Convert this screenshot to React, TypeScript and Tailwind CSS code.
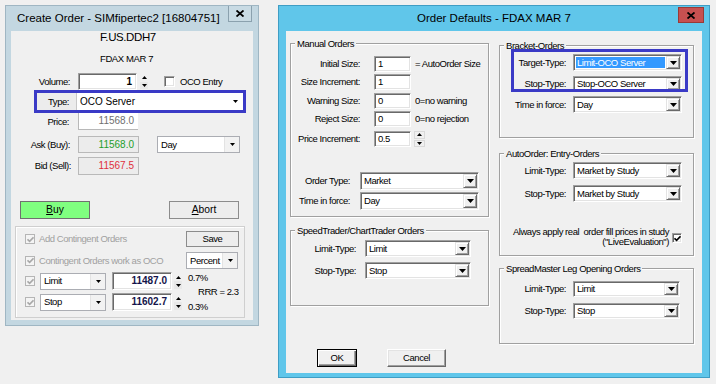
import React from "react";

const regular = "font-['Liberation_Sans',Arial,sans-serif]";

// classic win32 3D borders
const sunken =
  "border border-t-[#a0a0a0] border-l-[#a0a0a0] border-b-white border-r-white shadow-[inset_1px_1px_0_#696969,inset_-1px_-1px_0_#e3e3e3]";
const raised =
  "border border-t-white border-l-white border-b-[#696969] border-r-[#696969] shadow-[inset_-1px_-1px_0_#a0a0a0,inset_1px_1px_0_#e3e3e3]";
const arrowBtn =
  "border border-t-[#e3e3e3] border-l-[#e3e3e3] border-b-[#696969] border-r-[#696969] shadow-[inset_1px_1px_0_#fff,inset_-1px_-1px_0_#a0a0a0] bg-[#f0f0f0]";
const etched = "border border-[#a0a0a0] shadow-[inset_1px_1px_0_#fff,1px_1px_0_#fff]";
const value = `text-[10px] tracking-normal ${regular}`;

function Down({ w = 7, color = "#000" }: { w?: number; color?: string }) {
  const h = Math.ceil(w / 2);
  return (
    <svg width={w} height={h} viewBox={`0 0 ${w} ${h}`}>
      <path d={`M0 0H${w}L${w / 2} ${h}Z`} fill={color} />
    </svg>
  );
}

function Up({ w = 5, color = "#000" }: { w?: number; color?: string }) {
  const h = Math.ceil(w / 2);
  return (
    <svg width={w} height={h} viewBox={`0 0 ${w} ${h}`}>
      <path d={`M0 ${h}H${w}L${w / 2} 0Z`} fill={color} />
    </svg>
  );
}

function Check({ color = "#000" }: { color?: string }) {
  return (
    <svg width="7" height="7" viewBox="0 0 7 7">
      <path d="M0.5 3.3L2.6 5.4L6.5 1.3" fill="none" stroke={color} strokeWidth="1.6" />
    </svg>
  );
}

function CloseX() {
  return (
    <svg width="8" height="7" viewBox="0 0 8 7">
      <path d="M0.5 0.5L7.5 6.5M7.5 0.5L0.5 6.5" stroke="#000" strokeWidth="1.8" />
    </svg>
  );
}

function Combo({ text, className, selected }: { text: string; className: string; selected?: boolean }) {
  return (
    <div className={`flex bg-white ${sunken} ${className}`}>
      {selected ? (
        <div className="my-[2px] ml-[2px] mr-[1px] flex flex-1 items-center bg-[#3399ff] pl-[1px] text-white">{text}</div>
      ) : (
        <div className="flex flex-1 items-center pl-[3px]">{text}</div>
      )}
      <div className={`my-[1px] mr-[1px] flex w-[14px] items-center justify-center ${arrowBtn}`}>
        <Down />
      </div>
    </div>
  );
}

function Field({ text, className }: { text: string; className: string }) {
  return <div className={`flex items-center bg-white pl-[3px] ${sunken} ${className}`}>{text}</div>;
}

function Group({ title, className, children }: { title: string; className: string; children: React.ReactNode }) {
  return (
    <fieldset className={`p-0 ${etched} ${className}`}>
      <legend className="ml-[4px] bg-[#f0f0f0] px-[2px] leading-[13px]">{title}</legend>
      {children}
    </fieldset>
  );
}

function Row({ label, lw, className = "", children }: { label: string; lw: string; className?: string; children: React.ReactNode }) {
  return (
    <div className={`flex items-center ${className}`}>
      <span className={`text-right ${lw}`}>{label}</span>
      {children}
    </div>
  );
}

// themed controls of the Create Order window
function WinCombo({ text, className }: { text: string; className: string }) {
  return (
    <div className={`flex border border-[#abadb3] bg-white ${className}`}>
      <div className="flex flex-1 items-center pl-[3px]">{text}</div>
      <div className="flex w-[15px] items-center justify-center border-l border-[#e3e3e3] bg-[#f2f2f2]">
        <Down w={5} />
      </div>
    </div>
  );
}

function Spin({ className }: { className: string }) {
  return (
    <div className={`flex flex-col ${className}`}>
      <div className="flex flex-1 items-center justify-center">
        <Up w={5} />
      </div>
      <div className="flex flex-1 items-center justify-center bg-[#e8e8e8]">
        <Down w={5} />
      </div>
    </div>
  );
}

function DisabledBox() {
  return (
    <div className="flex h-[10px] w-[10px] items-center justify-center border border-[#b5b5b5] bg-[#f4f4f4]">
      <Check color="#a8a8a8" />
    </div>
  );
}

function CreateOrder() {
  return (
    <div className="absolute left-[5px] top-[5px] flex h-[321px] w-[254px] flex-col border border-[#9fb6c3] bg-[#c3d7e1]">
      <div className={`flex h-[25px] items-center pl-[11px] text-[11.5px] tracking-normal ${regular}`}>
        Create Order - SIMfipertec2 [16804751]
      </div>
      <div className="absolute right-[6px] top-0 flex h-[16px] w-[24px] items-center justify-center border border-t-0 border-[#8ba1ae] bg-[#c9dbe4]">
        <CloseX />
      </div>

      <div className="relative mx-[5px] h-[289px] bg-[#f0f0f0]">
        <div className="flex flex-col">
          <div className="h-[13px] pl-[89px] text-[11.5px] leading-[13px] tracking-[-0.4px]">F.US.DDH7</div>
          <div className="mt-[8px] h-[13px] pl-[89px] text-[9.5px] leading-[13px] tracking-[-0.4px]">FDAX MAR 7</div>

          <Row label="Volume:" lw="w-[59px]" className="mt-[8px] h-[17px]">
            <div className={`ml-[8px] flex h-[17px] w-[59px] items-center justify-end bg-white pr-[4px] font-bold ${value} ${sunken}`}>
              1
            </div>
            <Spin className="ml-[3px] h-[15px] w-[8px]" />
            <div className={`ml-[16px] h-[11px] w-[11px] bg-white ${sunken}`} />
            <span className="ml-[5px]">OCO Entry</span>
          </Row>

          <div className="mt-[3px] flex h-[17px] pl-[26px]">
            <div className="flex w-[40px] items-center justify-end border-r border-[#c8c8c8] bg-[#ececec] pr-[7px]">Type:</div>
            <div className={`flex w-[166px] items-center bg-white pl-[3px] ${value}`}>
              <span className="flex-1">OCO Server</span>
              <span className="mr-[5px] flex">
                <Down w={5} />
              </span>
            </div>
          </div>

          <Row label="Price:" lw="w-[58px]" className="mt-[3px] h-[17px]">
            <div className={`ml-[9px] flex h-[17px] w-[60px] items-center justify-end border-l border-b border-[#b8b8b8] bg-white pr-[4px] text-[#707070] ${value}`}>
              11568.0
            </div>
          </Row>

          <Row label="Ask (Buy):" lw="w-[59px]" className="mt-[6px] h-[17px]">
            <div className={`ml-[8px] flex h-[17px] w-[61px] items-center justify-end border border-[#b9b9b9] bg-[#ececec] pr-[4px] text-[#1f9e2a] ${value}`}>
              11568.0
            </div>
            <WinCombo text="Day" className="ml-[18px] h-[17px] w-[83px]" />
          </Row>

          <Row label="Bid (Sell):" lw="w-[60px]" className="mt-[4px] h-[18px]">
            <div className={`ml-[7px] flex h-[18px] w-[61px] items-center justify-end border border-[#b9b9b9] bg-[#ececec] pr-[4px] text-[#e0303c] ${value}`}>
              11567.5
            </div>
          </Row>

          <div className={`mt-[26px] flex h-[18px] text-[10.3px] tracking-normal ${regular}`}>
            <div className="ml-[9px] flex w-[70px] items-center justify-center border border-[#707070] bg-[#80ff80]">
              <span>
                <span className="underline">B</span>uy
              </span>
            </div>
            <div className="ml-[79px] flex w-[70px] items-center justify-center border border-[#8c8c8c] bg-[#ededed]">
              <span>
                <span className="underline">A</span>bort
              </span>
            </div>
          </div>

          <div className="ml-[4px] mt-[7px] flex h-[92px] w-[230px] flex-col border border-[#cfcfcf] shadow-[inset_1px_1px_0_#fff]">
            <div className="mt-[4px] flex h-[16px] items-center">
              <div className="ml-[9px]">
                <DisabledBox />
              </div>
              <span className="ml-[4px] text-[#a0a0a0]">Add Contingent Orders</span>
              <div className="ml-auto mr-[5px] flex h-[16px] w-[53px] items-center justify-center border border-[#8c8c8c] bg-[#ededed]">
                Save
              </div>
            </div>
            <div className="mt-[5px] flex h-[17px] items-center">
              <div className="ml-[9px]">
                <DisabledBox />
              </div>
              <span className="ml-[4px] text-[#a0a0a0]">Contingent Orders work as OCO</span>
              <WinCombo text="Percent" className="ml-auto mr-[6px] h-[17px] w-[52px]" />
            </div>
            <div className="mt-[3px] flex">
              <div className="flex flex-col">
                <div className="flex h-[18px] items-center">
                  <div className="ml-[9px]">
                    <DisabledBox />
                  </div>
                  <WinCombo text="Limit" className="ml-[5px] h-[17px] w-[66px]" />
                  <div className={`ml-[6px] flex h-[18px] w-[60px] items-center justify-end bg-white pr-[4px] font-bold text-[#14144a] ${value} ${sunken}`}>
                    11487.0
                  </div>
                  <Spin className="ml-[2px] h-[16px] w-[8px]" />
                </div>
                <div className="mt-[3px] flex h-[18px] items-center">
                  <div className="ml-[9px]">
                    <DisabledBox />
                  </div>
                  <WinCombo text="Stop" className="ml-[5px] h-[17px] w-[66px]" />
                  <div className={`ml-[6px] flex h-[18px] w-[60px] items-center justify-end bg-white pr-[4px] font-bold text-[#14144a] ${value} ${sunken}`}>
                    11602.7
                  </div>
                  <Spin className="ml-[2px] h-[16px] w-[8px]" />
                </div>
              </div>
              <div className="ml-[6px] flex flex-col leading-[12px]">
                <span>0.7%</span>
                <span className="mt-[2px] pl-[10px]">RRR = 2.3</span>
                <span className="mt-[3px]">0.3%</span>
              </div>
            </div>
          </div>
        </div>

        {/* annotation around the Type row */}
        <div className="pointer-events-none absolute left-[23px] top-[59px] h-[23px] w-[212px] border-[3px] border-[#3a3ac6]" />
      </div>
    </div>
  );
}

function OrderDefaults() {
  return (
    <div className="absolute left-[278px] top-[5px] flex h-[373px] w-[432px] flex-col border border-[#3f9dc4] bg-[#60c6ea]">
      <div className={`flex h-[25px] items-center justify-center text-[11.5px] tracking-normal ${regular}`}>
        Order Defaults - FDAX MAR 7
      </div>
      <div className="absolute right-[5px] top-[1px] flex h-[16px] w-[26px] items-center justify-center border border-[#9a3a36] bg-[#c75050]">
        <CloseX />
      </div>

      <div className="relative mx-[7px] flex h-[342px] bg-[#f0f0f0]">
        <div className="ml-[4px] flex w-[199px] flex-col">
          <Group title="Manual Orders" className="mt-[6px] h-[180px]">
            <div className="flex flex-col pt-[6px]">
              <Row label="Initial Size:" lw="w-[69px]" className="h-[16px]">
                <Field text="1" className="ml-[14px] h-[16px] w-[37px]" />
                <span className="ml-[4px]">= AutoOrder Size</span>
              </Row>
              <Row label="Size Increment:" lw="w-[69px]" className="mt-[2px] h-[16px]">
                <Field text="1" className="ml-[14px] h-[16px] w-[37px]" />
              </Row>
              <Row label="Warning Size:" lw="w-[69px]" className="mt-[3px] h-[16px]">
                <Field text="0" className="ml-[14px] h-[16px] w-[37px]" />
                <span className="ml-[4px]">0=no warning</span>
              </Row>
              <Row label="Reject Size:" lw="w-[69px]" className="mt-[2px] h-[16px]">
                <Field text="0" className="ml-[14px] h-[16px] w-[37px]" />
                <span className="ml-[4px]">0=no rejection</span>
              </Row>
              <Row label="Price Increment:" lw="w-[69px]" className="mt-[4px] h-[16px]">
                <Field text="0.5" className="ml-[14px] h-[16px] w-[37px]" />
                <div className="ml-[3px] flex h-[16px] w-[11px] flex-col gap-[1px]">
                  <div className="flex flex-1 items-center justify-center border border-[#d9d9d9]">
                    <Up w={5} />
                  </div>
                  <div className="flex flex-1 items-center justify-center border border-[#d9d9d9]">
                    <Down w={5} />
                  </div>
                </div>
              </Row>
              <Row label="Order Type:" lw="w-[59px]" className="mt-[25px] h-[18px]">
                <Combo text="Market" className="ml-[10px] h-[18px] w-[119px]" />
              </Row>
              <Row label="Time in force:" lw="w-[59px]" className="mt-[2px] h-[18px]">
                <Combo text="Day" className="ml-[10px] h-[18px] w-[119px]" />
              </Row>
            </div>
          </Group>

          <Group title="SpeedTrader/ChartTrader Orders" className="mt-[7px] h-[82px]">
            <div className="flex flex-col pt-[3px]">
              <Row label="Limit-Type:" lw="w-[65px]" className="h-[17px]">
                <Combo text="Limit" className="ml-[9px] h-[17px] w-[106px]" />
              </Row>
              <Row label="Stop-Type:" lw="w-[65px]" className="mt-[5px] h-[17px]">
                <Combo text="Stop" className="ml-[9px] h-[17px] w-[106px]" />
              </Row>
            </div>
          </Group>

          <div className="mt-[43px] flex h-[18px]">
            <div className="ml-[27px] flex w-[40px] items-center justify-center border border-black shadow-[inset_1px_1px_0_#fff,inset_-1px_-1px_0_#696969,inset_-2px_-2px_0_#a0a0a0]">
              OK
            </div>
            <div className={`ml-[30px] flex w-[59px] items-center justify-center ${raised}`}>Cancel</div>
          </div>
        </div>

        <div className="ml-[10px] flex w-[195px] flex-col">
          <Group title="Bracket-Orders" className="mt-[8px] h-[99px]">
            <div className="flex flex-col pt-[2px]">
              <Row label="Target-Type:" lw="w-[66px]" className="h-[17px]">
                <Combo text="Limit-OCO Server" selected className="ml-[7px] h-[17px] w-[109px]" />
              </Row>
              <Row label="Stop-Type:" lw="w-[66px]" className="mt-[5px] h-[16px]">
                <Combo text="Stop-OCO Server" className="ml-[7px] h-[16px] w-[109px]" />
              </Row>
              <Row label="Time in force:" lw="w-[66px]" className="mt-[4px] h-[17px]">
                <Combo text="Day" className="ml-[7px] h-[17px] w-[109px]" />
              </Row>
            </div>
          </Group>

          <Group title="AutoOrder: Entry-Orders" className="mt-[9px] h-[109px]">
            <div className="flex flex-col pt-[2px]">
              <Row label="Limit-Type:" lw="w-[66px]" className="h-[17px]">
                <Combo text="Market by Study" className="ml-[7px] h-[17px] w-[109px]" />
              </Row>
              <Row label="Stop-Type:" lw="w-[66px]" className="mt-[6px] h-[17px]">
                <Combo text="Market by Study" className="ml-[7px] h-[17px] w-[109px]" />
              </Row>
              <div className="mt-[25px] flex items-center justify-end pr-[11px]">
                <div className="flex flex-col items-end whitespace-pre leading-[10px]">
                  <span>Always apply real  order fill prices in study</span>
                  <span>("LiveEvaluation")</span>
                </div>
                <div className={`ml-[3px] mt-[2px] flex h-[10px] w-[10px] items-center justify-center bg-white ${sunken}`}>
                  <Check />
                </div>
              </div>
            </div>
          </Group>

          <Group title="SpreadMaster Leg Opening Orders" className="mt-[6px] h-[82px]">
            <div className="flex flex-col pt-[6px]">
              <Row label="Limit-Type:" lw="w-[66px]" className="h-[16px]">
                <Combo text="Limit" className="ml-[7px] h-[16px] w-[107px]" />
              </Row>
              <Row label="Stop-Type:" lw="w-[66px]" className="mt-[6px] h-[16px]">
                <Combo text="Stop" className="ml-[7px] h-[16px] w-[107px]" />
              </Row>
            </div>
          </Group>
        </div>

        {/* annotation around the bracket order types */}
        <div className="pointer-events-none absolute left-[225px] top-[18px] h-[43px] w-[177px] border-[3px] border-[#3a3ac6]" />
      </div>
    </div>
  );
}

export default function App() {
  return (
    <div className={`relative h-[384px] w-[716px] overflow-hidden whitespace-nowrap bg-[#f0f0f0] text-[9.5px] leading-none tracking-[-0.45px] text-black ${regular}`}>
      <CreateOrder />
      <OrderDefaults />
    </div>
  );
}
